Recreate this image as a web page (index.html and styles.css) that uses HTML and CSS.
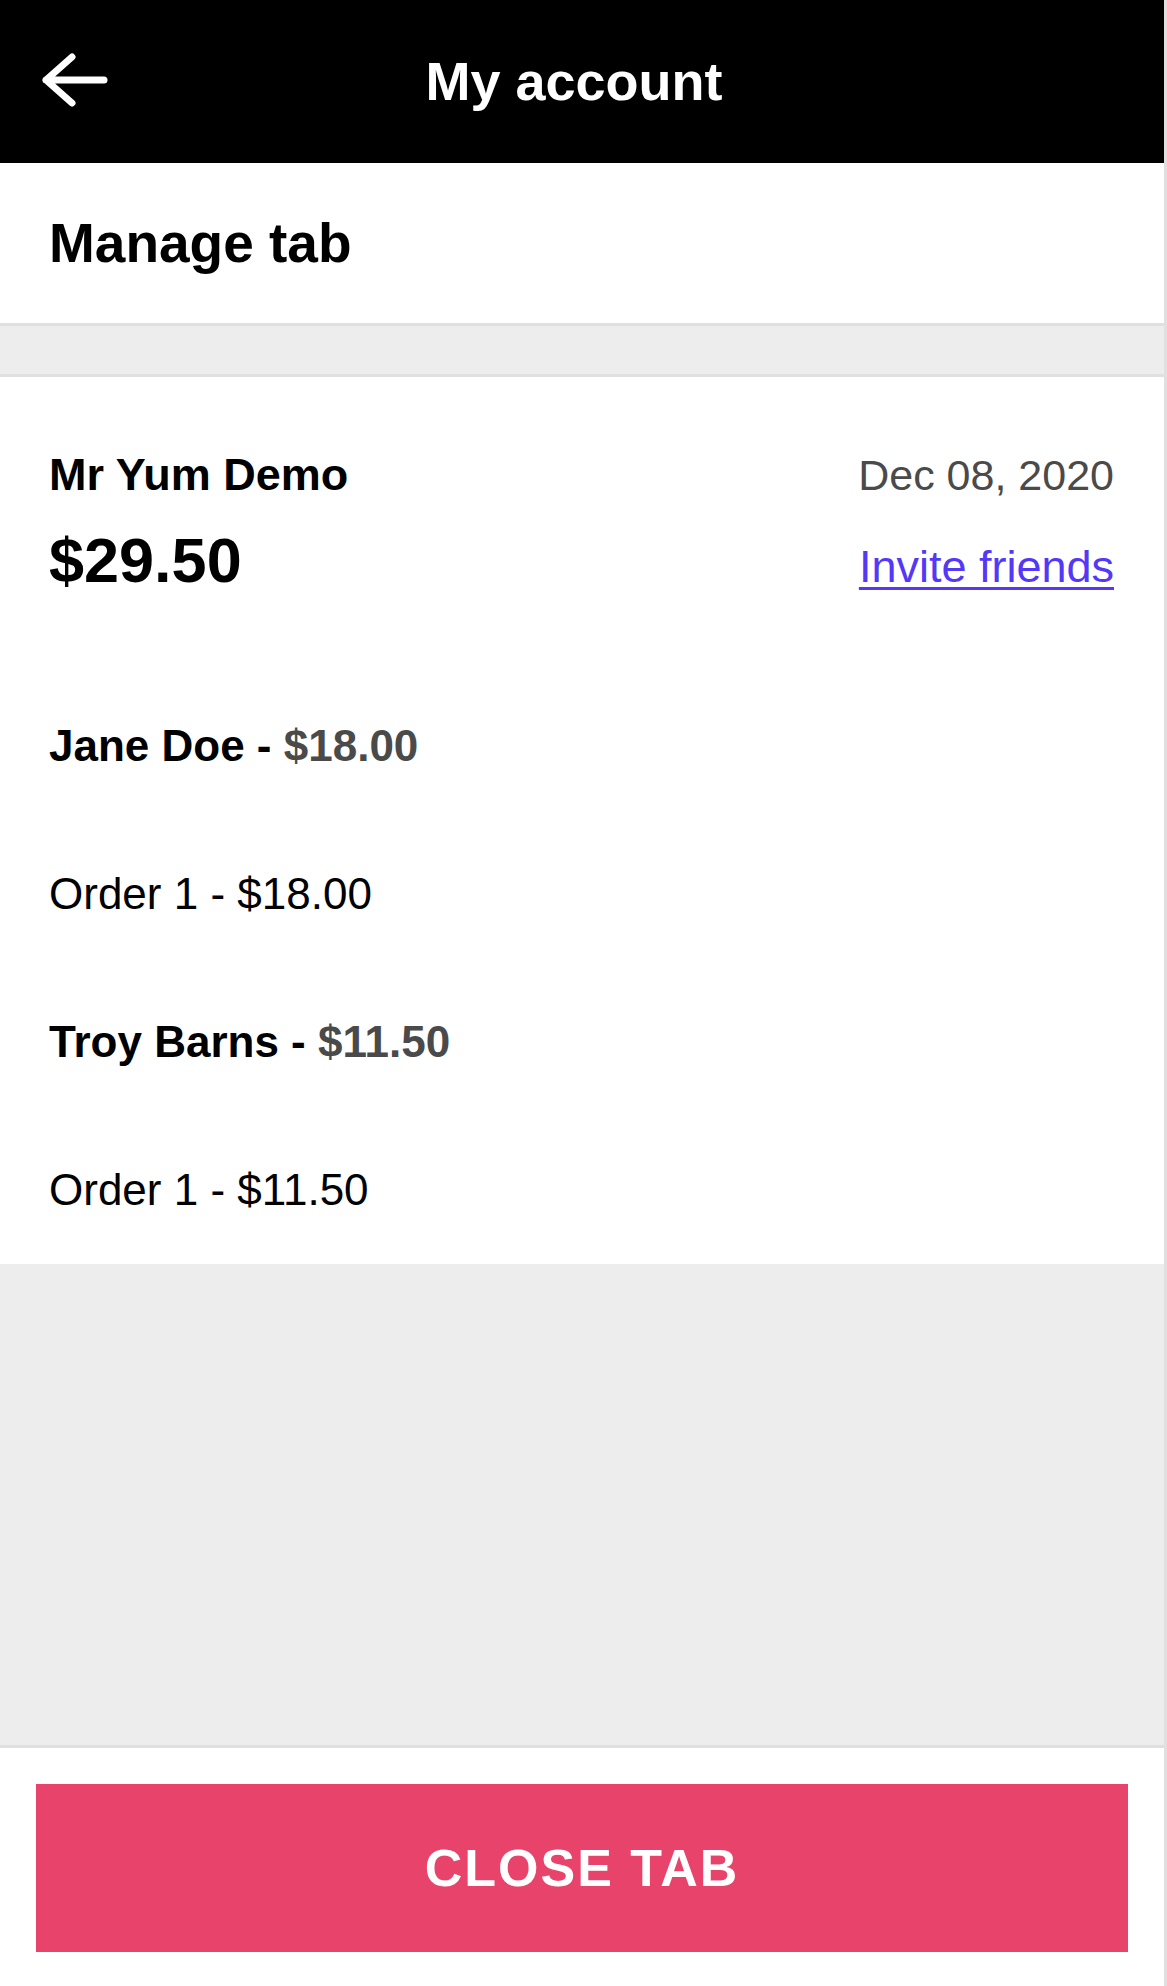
FILE: index.html
```html
<!DOCTYPE html>
<html lang="en">
<head>
    <meta charset="UTF-8">
    <meta name="viewport" content="width=device-width, initial-scale=1.0">
    <title>My account</title>
    <link rel="stylesheet" href="styles.css">
</head>
<body>

    <!-- top bar -->
    <header class="topbar">
        <a class="back" href="#">
            <svg width="66" height="56" viewBox="0 0 66 56">
                <path d="M30 5 L4 28 L30 51 M4 28 L62 28" fill="none" stroke="#fff" stroke-width="7" stroke-linecap="round" stroke-linejoin="round"/>
            </svg>
        </a>
        <h1 class="title">My account</h1>
        <span></span>
    </header>

    <div class="section-head">Manage tab</div>

    <!-- tab card -->
    <div class="card">
        <div class="row">
            <span class="venue">Mr Yum Demo</span>
            <span class="date">Dec 08, 2020</span>
        </div>
        <div class="row total-row">
            <span class="total">$29.50</span>
            <a class="invite" href="#">Invite friends</a>
        </div>

        <ul class="people">
            <li class="person">Jane Doe - <span class="amount">$18.00</span></li>
            <li class="order">Order 1 - $18.00</li>
            <li class="person">Troy Barns - <span class="amount">$11.50</span></li>
            <li class="order">Order 1 - $11.50</li>
        </ul>
    </div>

    <div class="filler"></div>

    <footer class="footer">
        <button class="close-btn">CLOSE TAB</button>
    </footer>

</body>
</html>
```

FILE: styles.css
```css
html { background: #e0e0e0; }
body { margin: 0; width: 1164px; min-height: 1986px; background: #ededed; font-family: "Liberation Sans", Arial, sans-serif; color: #000; display: flex; flex-direction: column; }

.topbar { height: 163px; background: #000; display: grid; grid-template-columns: 120px 1fr 120px; align-items: start; }
.back { display: block; padding: 52px 0 0 42px; height: 56px; }
.back svg { display: block; }
.title { margin: 0; padding-right: 16px; text-align: center; color: #fff; font-size: 54px; font-weight: bold; line-height: 163px; }

.section-head { height: 160px; line-height: 160px; padding-left: 49px; background: #fff; font-size: 55px; font-weight: bold; border-bottom: 3px solid #e0e0e0; margin-bottom: 48px; }

.card { background: #fff; border-top: 3px solid #e0e0e0; padding: 71px 50px 0 49px; }
.row { display: flex; justify-content: space-between; align-items: baseline; }
.venue { font-size: 45px; font-weight: bold; line-height: 54px; }
.date { font-size: 43px; color: #4a4a4a; line-height: 54px; }
.total-row { margin-top: 20px; }
.total { font-size: 63px; font-weight: bold; line-height: 76px; }
.invite { font-size: 45px; color: #5438f7; line-height: 76px; text-decoration-thickness: 3px; text-underline-offset: 5px; }

.people { list-style: none; margin: 67px 0 0 0; padding: 0; }
.people li { font-size: 44px; line-height: 148px; height: 148px; }
.person { font-weight: bold; }
.amount { color: #4a4a4a; }

.filler { flex: 1; }

.footer { background: #fff; border-top: 3px solid #e0e0e0; padding: 36px 36px 34px 36px; }
.close-btn { display: flex; align-items: center; justify-content: center; width: 100%; height: 168px; border: none; background: #e8436a; color: #fff; font-family: "Liberation Sans", Arial, sans-serif; font-size: 52px; font-weight: bold; letter-spacing: 2px; cursor: pointer; }
```
